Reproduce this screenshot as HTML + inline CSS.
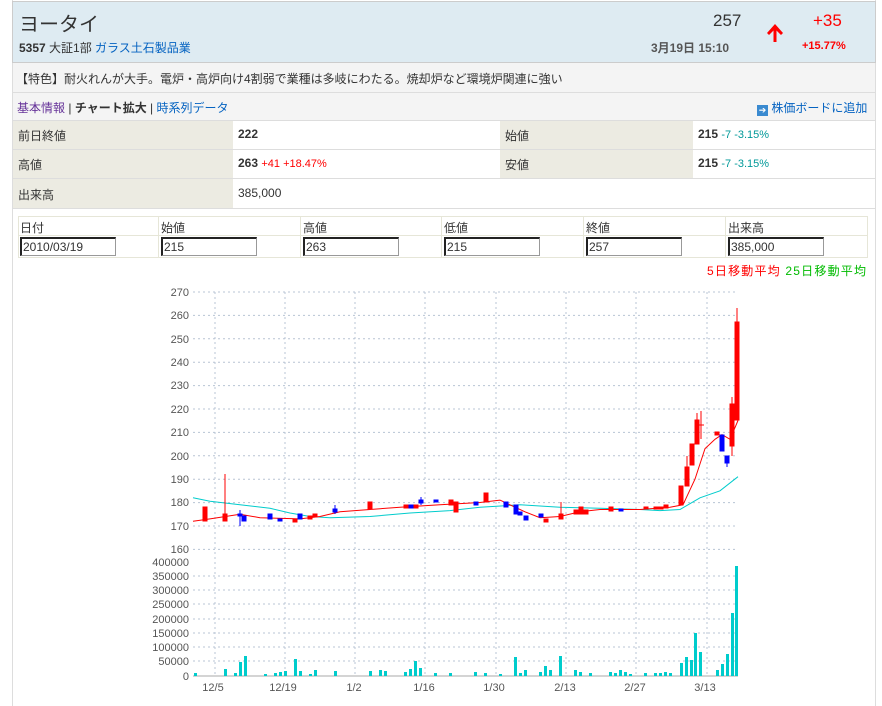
<!DOCTYPE html>
<html><head><meta charset="utf-8"><style>
body{margin:0;background:#fff;font-family:"Liberation Sans","Noto Sans CJK JP",sans-serif;font-size:12px;color:#333;width:882px;height:706px;overflow:hidden;position:relative}
.a{position:absolute;white-space:nowrap}
.b{font-weight:bold}
.r{color:#f00}.t{color:#099}
a{color:#0563c1;text-decoration:none}
.cell{position:absolute;border-bottom:1px solid #ddd;box-sizing:border-box}
.inp{position:absolute;top:237px;width:96px;height:19px;box-sizing:border-box;border:1px solid #999;border-top:2px solid #222;border-left:2px solid #222;font-size:12px;line-height:16px;padding-left:1px;background:#fff}
</style></head><body>
<div class="a" style="left:12px;top:0;width:864px;height:706px;border-left:1px solid #ddd;border-right:1px solid #ddd;box-sizing:border-box"></div>
<div class="a" style="left:12px;top:1px;width:864px;height:62px;background:#deebf2;border:1px solid #ccc;box-sizing:border-box"></div>
<div class="a" style="left:19px;top:8px;font-size:20px;color:#333">ヨータイ</div>
<div class="a" style="left:19px;top:39px;font-size:12px"><b>5357</b> 大証1部 <a>ガラス土石製品業</a></div>
<div class="a" style="left:713px;top:11px;font-size:17px">257</div>
<div class="a" style="left:765px;top:22px;width:20px;height:22px"><svg width="20" height="22"><path d="M10 2 L2 11 L4 13 L8.5 8.5 L8.5 20 L11.5 20 L11.5 8.5 L16 13 L18 11Z" fill="#f00"/></svg></div>
<div class="a r" style="left:813px;top:11px;font-size:17px">+35</div>
<div class="a b" style="left:651px;top:39px;color:#555">3月19日 15:10</div>
<div class="a b r" style="left:802px;top:40px;font-size:11px">+15.77%</div>
<div class="a" style="left:13px;top:63px;width:862px;height:58px;background:#f4f4f4"></div>
<div class="a" style="left:13px;top:92px;width:862px;border-top:1px solid #ddd"></div>
<div class="a" style="left:13px;top:120px;width:862px;border-top:1px solid #ddd"></div>
<div class="a" style="left:16px;top:70px">【特色】耐火れんが大手。電炉・高炉向け4割弱で業種は多岐にわたる。焼却炉など環境炉関連に強い</div>
<div class="a" style="left:17px;top:99px"><a style="color:#639">基本情報</a> | <b>チャート拡大</b> | <a>時系列データ</a></div>
<div class="a" style="left:757px;top:99px"><span style="display:inline-block;width:11px;height:11px;background:#3a8ad0;color:#fff;font-size:9px;line-height:11px;text-align:center;vertical-align:-1px">➔</span> <a>株価ボードに追加</a></div>
<div class="cell" style="left:13px;top:121px;width:220px;height:29px;background:#ecebe2;padding:6px 5px">前日終値</div>
<div class="cell b" style="left:233px;top:121px;width:267px;height:29px;padding:6px 5px">222</div>
<div class="cell" style="left:500px;top:121px;width:193px;height:29px;background:#ecebe2;padding:6px 5px">始値</div>
<div class="cell" style="left:693px;top:121px;width:182px;height:29px;padding:6px 5px"><b>215</b> <span class="t" style="font-size:11px">-7 -3.15%</span></div>
<div class="cell" style="left:13px;top:150px;width:220px;height:29px;background:#ecebe2;padding:6px 5px">高値</div>
<div class="cell" style="left:233px;top:150px;width:267px;height:29px;padding:6px 5px"><b>263</b> <span class="r" style="font-size:11px">+41 +18.47%</span></div>
<div class="cell" style="left:500px;top:150px;width:193px;height:29px;background:#ecebe2;padding:6px 5px">安値</div>
<div class="cell" style="left:693px;top:150px;width:182px;height:29px;padding:6px 5px"><b>215</b> <span class="t" style="font-size:11px">-7 -3.15%</span></div>
<div class="cell" style="left:13px;top:179px;width:220px;height:30px;background:#ecebe2;padding:7px 5px">出来高</div>
<div class="cell" style="left:233px;top:179px;width:642px;height:30px;padding:7px 5px">385,000</div>
<div class="a" style="left:18px;top:216px;width:850px;height:42px;border:1px solid #e6e6d8;box-sizing:border-box"></div>
<div class="a" style="left:18px;top:235px;width:850px;border-top:1px solid #e6e6d8"></div>
<div class="a" style="left:20px;top:219px">日付</div><div class="a" style="left:161px;top:219px">始値</div><div class="a" style="left:303px;top:219px">高値</div><div class="a" style="left:444px;top:219px">低値</div><div class="a" style="left:586px;top:219px">終値</div><div class="a" style="left:728px;top:219px">出来高</div>
<div class="a" style="left:158px;top:216px;height:42px;border-left:1px solid #e6e6d8"></div><div class="a" style="left:300px;top:216px;height:42px;border-left:1px solid #e6e6d8"></div><div class="a" style="left:441px;top:216px;height:42px;border-left:1px solid #e6e6d8"></div><div class="a" style="left:583px;top:216px;height:42px;border-left:1px solid #e6e6d8"></div><div class="a" style="left:725px;top:216px;height:42px;border-left:1px solid #e6e6d8"></div>
<div class="inp" style="left:20px">2010/03/19</div><div class="inp" style="left:161px">215</div><div class="inp" style="left:303px">263</div><div class="inp" style="left:444px">215</div><div class="inp" style="left:586px">257</div><div class="inp" style="left:728px">385,000</div>
<div class="a" style="left:707px;top:262px;letter-spacing:1.2px"><span class="r">5日移動平均</span> <span style="color:#0b0">25日移動平均</span></div>
<svg class="a" style="left:0;top:0" width="882" height="706" font-family="Liberation Sans,sans-serif" font-size="11" fill="#555">
<g stroke="#b8c4d4" stroke-dasharray="2,3" stroke-width="1">
<line x1="193" x2="738" y1="292" y2="292"/><line x1="193" x2="738" y1="315.4" y2="315.4"/><line x1="193" x2="738" y1="338.8" y2="338.8"/><line x1="193" x2="738" y1="362.2" y2="362.2"/><line x1="193" x2="738" y1="385.6" y2="385.6"/><line x1="193" x2="738" y1="409" y2="409"/><line x1="193" x2="738" y1="432.4" y2="432.4"/><line x1="193" x2="738" y1="455.8" y2="455.8"/><line x1="193" x2="738" y1="479.2" y2="479.2"/><line x1="193" x2="738" y1="502.6" y2="502.6"/><line x1="193" x2="738" y1="526" y2="526"/><line x1="193" x2="738" y1="549.4" y2="549.4"/>
<line x1="193" x2="738" y1="576" y2="576"/><line x1="193" x2="738" y1="590" y2="590"/><line x1="193" x2="738" y1="604" y2="604"/><line x1="193" x2="738" y1="619" y2="619"/><line x1="193" x2="738" y1="633" y2="633"/><line x1="193" x2="738" y1="647" y2="647"/><line x1="193" x2="738" y1="661" y2="661"/>
<line x1="215" x2="215" y1="292" y2="676"/><line x1="285" x2="285" y1="292" y2="676"/><line x1="355" x2="355" y1="292" y2="676"/><line x1="425" x2="425" y1="292" y2="676"/><line x1="496" x2="496" y1="292" y2="676"/><line x1="566" x2="566" y1="292" y2="676"/><line x1="636" x2="636" y1="292" y2="676"/><line x1="707" x2="707" y1="292" y2="676"/>
</g>
<line x1="193" x2="738" y1="676" y2="676" stroke="#aaa"/>
<g text-anchor="end">
<text x="189" y="296">270</text><text x="189" y="319">260</text><text x="189" y="343">250</text><text x="189" y="366">240</text><text x="189" y="389">230</text><text x="189" y="413">220</text><text x="189" y="436">210</text><text x="189" y="460">200</text><text x="189" y="483">190</text><text x="189" y="506">180</text><text x="189" y="530">170</text><text x="189" y="553">160</text>
<text x="189" y="566">400000</text><text x="189" y="580">350000</text><text x="189" y="594">300000</text><text x="189" y="608">250000</text><text x="189" y="623">200000</text><text x="189" y="637">150000</text><text x="189" y="651">100000</text><text x="189" y="665">50000</text><text x="189" y="680">0</text>
</g>
<g text-anchor="middle"><text x="213" y="691">12/5</text><text x="283" y="691">12/19</text><text x="354" y="691">1/2</text><text x="424" y="691">1/16</text><text x="494" y="691">1/30</text><text x="565" y="691">2/13</text><text x="635" y="691">2/27</text><text x="705" y="691">3/13</text></g>
<polyline fill="none" stroke="#0cc" stroke-width="1" points="193,497.8 210,501.3 240,504.8 270,508.3 290,513 310,516.5 330,517.7 370,516.5 410,513 450,510.6 480,507.2 520,504.8 560,507.2 600,508.3 640,509.5 660,510.6 680,509.5 700,497.8 720,490.8 738,476.7"/>
<polyline fill="none" stroke="#f00" stroke-width="1" points="193,521.2 210,518.9 240,514.2 260,517.7 300,518.9 320,516.5 340,511.8 370,509.5 400,507.2 440,504.8 480,502.5 500,500.1 515,507.2 525,511.8 540,517.7 560,516.5 580,511.8 600,509.5 640,509.5 670,507.2 683,504.8 695,479.1 705,448.6 715,439.3 722,434.6 730,439.3 738,420.5"/>
<g fill="#f00" stroke="#f00">
<rect x="203" y="507" width="4" height="14"/><rect x="223" y="514" width="4" height="7"/><line x1="225" y1="474" x2="225" y2="514"/>
<rect x="293" y="519" width="4" height="3"/><rect x="308" y="516" width="4" height="3"/><rect x="313" y="514" width="4" height="3"/>
<rect x="368" y="502" width="4" height="7"/><rect x="404" y="505" width="4" height="3"/><rect x="414" y="505" width="4" height="3"/>
<rect x="449" y="500" width="4" height="5"/><rect x="454" y="502" width="4" height="10"/><rect x="484" y="493" width="4" height="9"/>
<rect x="544" y="519" width="4" height="3"/><rect x="559" y="514" width="4" height="5"/><line x1="561" y1="502" x2="561" y2="519"/>
<rect x="574" y="510" width="4" height="4"/><rect x="579" y="507" width="4" height="7"/><rect x="584" y="510" width="4" height="4"/>
<rect x="609" y="507" width="4" height="4"/><rect x="644" y="507" width="4" height="2"/><rect x="654" y="507" width="4" height="2"/><rect x="659" y="507" width="4" height="2"/><rect x="664" y="505" width="4" height="3"/>
<rect x="679" y="486" width="4" height="19"/><rect x="685" y="467" width="4" height="19"/><line x1="687" y1="456" x2="687" y2="486"/>
<rect x="690" y="444" width="4" height="21"/><rect x="695" y="420" width="4" height="24"/><line x1="697" y1="413" x2="697" y2="444"/>
<line x1="699" y1="425" x2="704" y2="425"/><line x1="701" y1="411" x2="701" y2="439"/>
<rect x="715" y="432" width="4" height="3"/><rect x="730" y="404" width="4" height="42"/><line x1="732" y1="397" x2="732" y2="456"/>
<rect x="735" y="322" width="4" height="98"/><line x1="737" y1="308" x2="737" y2="322"/>
</g>
<g fill="#00f" stroke="#00f">
<rect x="238" y="514" width="4" height="2"/><line x1="240" y1="510" x2="240" y2="526"/><rect x="242" y="516" width="4" height="5"/>
<rect x="268" y="514" width="4" height="5"/><rect x="278" y="519" width="4" height="2"/><rect x="298" y="514" width="4" height="5"/>
<rect x="333" y="509" width="4" height="3"/><line x1="335" y1="505" x2="335" y2="514"/>
<rect x="409" y="505" width="4" height="3"/><rect x="419" y="500" width="4" height="3"/><line x1="421" y1="497" x2="421" y2="505"/><rect x="434" y="500" width="4" height="2"/>
<rect x="474" y="502" width="4" height="3"/><rect x="504" y="502" width="4" height="5"/><rect x="514" y="505" width="4" height="9"/><rect x="518" y="512" width="4" height="3"/><rect x="524" y="516" width="4" height="4"/><rect x="539" y="514" width="4" height="3"/>
<rect x="619" y="509" width="4" height="2"/>
<rect x="720" y="435" width="4" height="16"/><rect x="725" y="456" width="4" height="7"/><line x1="727" y1="463" x2="727" y2="467"/>
</g>
<g fill="#0cc">
<rect x="194" y="673" width="3" height="3"/><rect x="224" y="669" width="3" height="7"/><rect x="234" y="673" width="3" height="3"/><rect x="239" y="662" width="3" height="14"/><rect x="244" y="656" width="3" height="20"/>
<rect x="264" y="674" width="3" height="2"/><rect x="274" y="673" width="3" height="3"/><rect x="279" y="672" width="3" height="4"/><rect x="284" y="671" width="3" height="5"/>
<rect x="294" y="659" width="3" height="17"/><rect x="299" y="671" width="3" height="5"/><rect x="309" y="674" width="3" height="2"/><rect x="314" y="670" width="3" height="6"/><rect x="334" y="671" width="3" height="5"/>
<rect x="369" y="671" width="3" height="5"/><rect x="379" y="670" width="3" height="6"/><rect x="384" y="671" width="3" height="5"/><rect x="404" y="672" width="3" height="4"/><rect x="409" y="669" width="3" height="7"/><rect x="414" y="661" width="3" height="15"/><rect x="419" y="668" width="3" height="8"/>
<rect x="434" y="673" width="3" height="3"/><rect x="449" y="673" width="3" height="3"/><rect x="474" y="672" width="3" height="4"/><rect x="484" y="673" width="3" height="3"/><rect x="499" y="674" width="3" height="2"/>
<rect x="514" y="657" width="3" height="19"/><rect x="519" y="673" width="3" height="3"/><rect x="524" y="670" width="3" height="6"/><rect x="539" y="672" width="3" height="4"/><rect x="544" y="666" width="3" height="10"/><rect x="549" y="670" width="3" height="6"/><rect x="559" y="656" width="3" height="20"/>
<rect x="574" y="670" width="3" height="6"/><rect x="579" y="672" width="3" height="4"/><rect x="589" y="673" width="3" height="3"/><rect x="609" y="672" width="3" height="4"/><rect x="614" y="673" width="3" height="3"/><rect x="619" y="670" width="3" height="6"/><rect x="624" y="672" width="3" height="4"/><rect x="629" y="674" width="3" height="2"/>
<rect x="644" y="673" width="3" height="3"/><rect x="654" y="673" width="3" height="3"/><rect x="659" y="673" width="3" height="3"/><rect x="664" y="672" width="3" height="4"/><rect x="669" y="673" width="3" height="3"/>
<rect x="680" y="663" width="3" height="13"/><rect x="685" y="657" width="3" height="19"/><rect x="690" y="660" width="3" height="16"/><rect x="694" y="633" width="3" height="43"/><rect x="699" y="652" width="3" height="24"/>
<rect x="716" y="670" width="3" height="6"/><rect x="721" y="664" width="3" height="12"/><rect x="726" y="654" width="3" height="22"/><rect x="731" y="613" width="3" height="63"/><rect x="735" y="566" width="3" height="110"/>
</g>
</svg>
</body></html>
